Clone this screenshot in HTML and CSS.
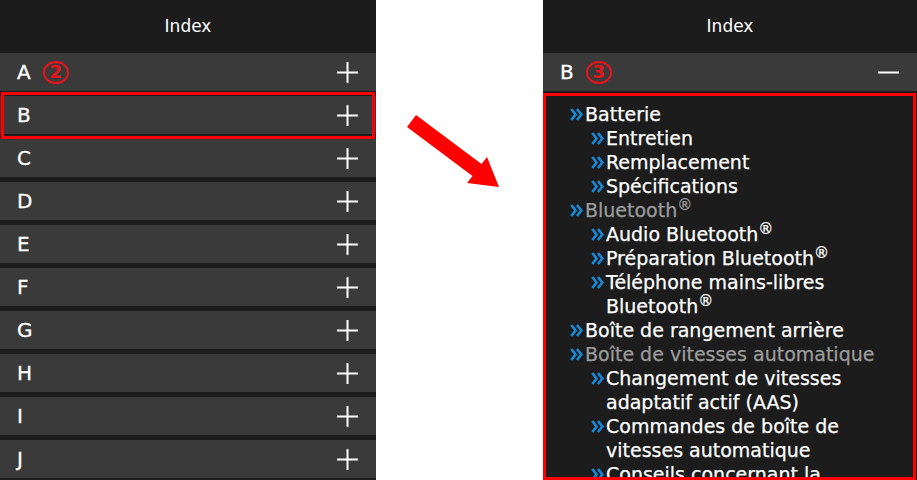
FILE: index.html
```html
<!DOCTYPE html>
<html lang="fr">
<head>
<meta charset="utf-8">
<title>Index</title>
<link rel="stylesheet" href="styles.css">
</head>
<body>
<div class="screen">
  <section class="panel panel-left">
    <header class="panel-header">Index</header>
    <ul class="alpha">
      <li class="alpha-row"><span class="alpha-letter">A</span><span class="badge">2</span><svg class="toggle" viewBox="0 0 21 21"><path d="M0 10.5H21M10.5 0V21"/></svg></li>
      <li class="alpha-row"><span class="alpha-letter">B</span><svg class="toggle" viewBox="0 0 21 21"><path d="M0 10.5H21M10.5 0V21"/></svg></li>
      <li class="alpha-row"><span class="alpha-letter">C</span><svg class="toggle" viewBox="0 0 21 21"><path d="M0 10.5H21M10.5 0V21"/></svg></li>
      <li class="alpha-row"><span class="alpha-letter">D</span><svg class="toggle" viewBox="0 0 21 21"><path d="M0 10.5H21M10.5 0V21"/></svg></li>
      <li class="alpha-row"><span class="alpha-letter">E</span><svg class="toggle" viewBox="0 0 21 21"><path d="M0 10.5H21M10.5 0V21"/></svg></li>
      <li class="alpha-row"><span class="alpha-letter">F</span><svg class="toggle" viewBox="0 0 21 21"><path d="M0 10.5H21M10.5 0V21"/></svg></li>
      <li class="alpha-row"><span class="alpha-letter">G</span><svg class="toggle" viewBox="0 0 21 21"><path d="M0 10.5H21M10.5 0V21"/></svg></li>
      <li class="alpha-row"><span class="alpha-letter">H</span><svg class="toggle" viewBox="0 0 21 21"><path d="M0 10.5H21M10.5 0V21"/></svg></li>
      <li class="alpha-row"><span class="alpha-letter">I</span><svg class="toggle" viewBox="0 0 21 21"><path d="M0 10.5H21M10.5 0V21"/></svg></li>
      <li class="alpha-row"><span class="alpha-letter">J</span><svg class="toggle" viewBox="0 0 21 21"><path d="M0 10.5H21M10.5 0V21"/></svg></li>
    </ul>
    <div class="highlight"></div>
  </section>

  <div class="gutter">
    <svg class="arrow" viewBox="376 0 167 480">
      <polygon points="416,115 481.5,164 487,157 499,187 467,183 472.5,176 407,127"/>
    </svg>
  </div>

  <section class="panel panel-right">
    <header class="panel-header">Index</header>
    <div class="alpha-row"><span class="alpha-letter">B</span><span class="badge">3</span><svg class="toggle" viewBox="0 0 21 21"><path d="M0 10.5H21"/></svg></div>
    <div class="expanded">
      <ul class="topics">
        <li class="topic"><svg class="chev" viewBox="0 0 13 13"><path d="M1.3 1L5.6 6.5L1.3 12M7 1L11.3 6.5L7 12"/></svg><span class="label">Batterie</span></li>
        <li class="topic sub"><svg class="chev" viewBox="0 0 13 13"><path d="M1.3 1L5.6 6.5L1.3 12M7 1L11.3 6.5L7 12"/></svg><span class="label">Entretien</span></li>
        <li class="topic sub"><svg class="chev" viewBox="0 0 13 13"><path d="M1.3 1L5.6 6.5L1.3 12M7 1L11.3 6.5L7 12"/></svg><span class="label">Remplacement</span></li>
        <li class="topic sub"><svg class="chev" viewBox="0 0 13 13"><path d="M1.3 1L5.6 6.5L1.3 12M7 1L11.3 6.5L7 12"/></svg><span class="label">Spécifications</span></li>
        <li class="topic muted"><svg class="chev" viewBox="0 0 13 13"><path d="M1.3 1L5.6 6.5L1.3 12M7 1L11.3 6.5L7 12"/></svg><span class="label">Bluetooth<sup>®</sup></span></li>
        <li class="topic sub"><svg class="chev" viewBox="0 0 13 13"><path d="M1.3 1L5.6 6.5L1.3 12M7 1L11.3 6.5L7 12"/></svg><span class="label">Audio Bluetooth<sup>®</sup></span></li>
        <li class="topic sub"><svg class="chev" viewBox="0 0 13 13"><path d="M1.3 1L5.6 6.5L1.3 12M7 1L11.3 6.5L7 12"/></svg><span class="label">Préparation Bluetooth<sup>®</sup></span></li>
        <li class="topic sub"><svg class="chev" viewBox="0 0 13 13"><path d="M1.3 1L5.6 6.5L1.3 12M7 1L11.3 6.5L7 12"/></svg><span class="label">Téléphone mains-libres Bluetooth<sup>®</sup></span></li>
        <li class="topic"><svg class="chev" viewBox="0 0 13 13"><path d="M1.3 1L5.6 6.5L1.3 12M7 1L11.3 6.5L7 12"/></svg><span class="label">Boîte de rangement arrière</span></li>
        <li class="topic muted"><svg class="chev" viewBox="0 0 13 13"><path d="M1.3 1L5.6 6.5L1.3 12M7 1L11.3 6.5L7 12"/></svg><span class="label">Boîte de vitesses automatique</span></li>
        <li class="topic sub"><svg class="chev" viewBox="0 0 13 13"><path d="M1.3 1L5.6 6.5L1.3 12M7 1L11.3 6.5L7 12"/></svg><span class="label">Changement de vitesses adaptatif actif (AAS)</span></li>
        <li class="topic sub"><svg class="chev" viewBox="0 0 13 13"><path d="M1.3 1L5.6 6.5L1.3 12M7 1L11.3 6.5L7 12"/></svg><span class="label">Commandes de boîte de vitesses automatique</span></li>
        <li class="topic sub"><svg class="chev" viewBox="0 0 13 13"><path d="M1.3 1L5.6 6.5L1.3 12M7 1L11.3 6.5L7 12"/></svg><span class="label">Conseils concernant la conduite</span></li>
      </ul>
    </div>
  </section>
</div>
</body>
</html>
```

FILE: styles.css
```css
* { box-sizing: border-box; }

html, body {
  margin: 0;
  padding: 0;
  background: #ffffff;
}

body {
  font-family: "DejaVu Sans", "Noto Sans", sans-serif;
  color: #ffffff;
}

.screen {
  display: flex;
  width: 917px;
  height: 480px;
  overflow: hidden;
}

.panel {
  position: relative;
  display: flex;
  flex-direction: column;
  height: 480px;
  background: #1c1c1c;
  overflow: hidden;
}

.panel-left { width: 376px; }
.panel-right { width: 374px; }

.gutter {
  position: relative;
  flex: 1;
}

.arrow {
  position: absolute;
  left: 0;
  top: 0;
  width: 167px;
  height: 480px;
  fill: #ff0000;
}

.panel-header {
  height: 53px;
  flex-shrink: 0;
  display: flex;
  align-items: center;
  justify-content: center;
  font-size: 17px;
  padding-bottom: 2px;
}

.alpha {
  list-style: none;
  margin: 0;
  padding: 0;
  display: flex;
  flex-direction: column;
  gap: 5px;
}

.alpha-row {
  height: 38px;
  flex-shrink: 0;
  display: flex;
  align-items: center;
  padding: 0 18px 0 17px;
  background: #3a3a3a;
}

.alpha-letter {
  font-size: 20px;
  line-height: 1;
  -webkit-text-stroke: 0.3px #ffffff;
}

.badge {
  margin-left: 12px;
  width: 26px;
  height: 23px;
  border: 2px solid #e8141b;
  border-radius: 50%;
  display: flex;
  align-items: center;
  justify-content: center;
  color: #e8141b;
  font-size: 18px;
  font-weight: bold;
  line-height: 1;
}

.toggle {
  margin-left: auto;
  width: 21px;
  height: 21px;
  stroke: #ffffff;
  stroke-width: 2;
  fill: none;
}

.highlight {
  position: absolute;
  left: 1px;
  top: 92px;
  width: 374px;
  height: 47px;
  border: 3px solid #ff0000;
}

.expanded {
  flex: 1;
  margin: 2px 1px 0 0;
  border: 3px solid #ff0000;
  border-bottom: 0;
  background: #1c1c1c;
  overflow: hidden;
  position: relative;
}

.expanded::after {
  content: "";
  position: absolute;
  left: 0;
  right: 0;
  bottom: 0;
  height: 3px;
  background: #ff0000;
}

.topics {
  list-style: none;
  margin: 0;
  padding: 6px 20px 0 24px;
  font-size: 19px;
  line-height: 24px;
}

.topic {
  display: flex;
  align-items: flex-start;
}

.topic.sub {
  padding-left: 21px;
}

.chev {
  flex-shrink: 0;
  width: 13px;
  height: 13px;
  margin: 6px 2px 0 0;
  fill: none;
  stroke: #1a8ad8;
  stroke-width: 2.6;
}

.label {
  -webkit-text-stroke: 0.25px currentColor;
}

.muted .label {
  color: #9c9c9c;
}

sup {
  font-size: 15px;
  line-height: 0;
  vertical-align: 7px;
}
```
